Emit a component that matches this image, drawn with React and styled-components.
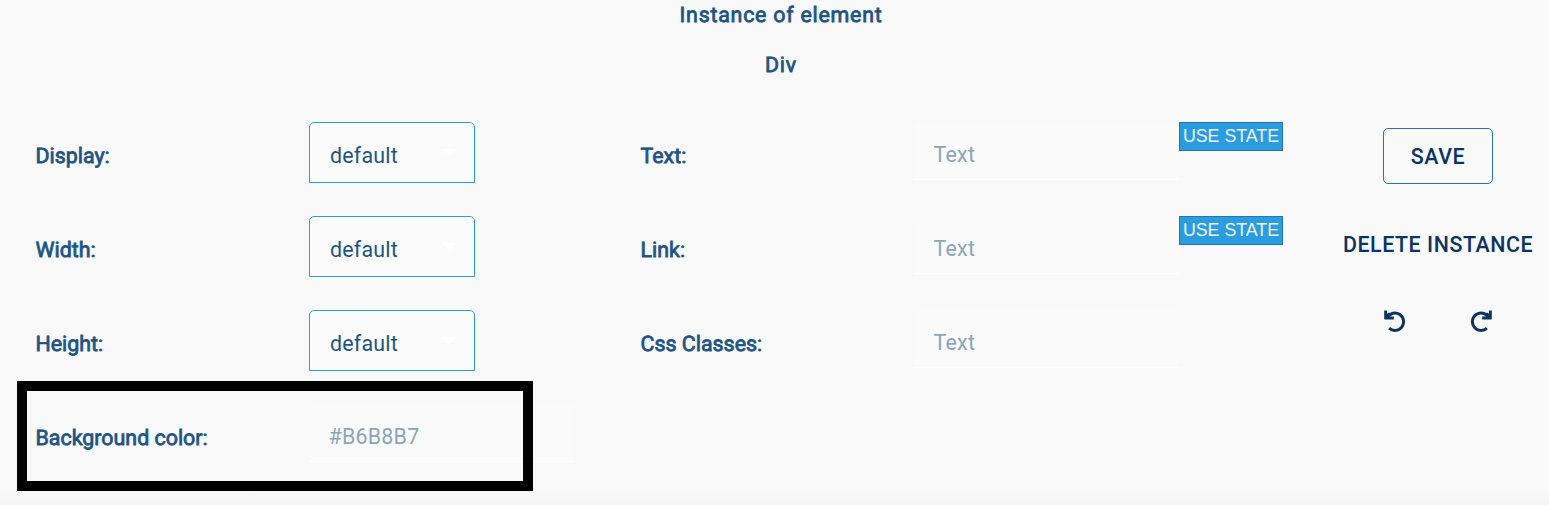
import React from "react";
import styled, { createGlobalStyle } from "styled-components";

const GlobalStyle = createGlobalStyle`
  * { box-sizing: border-box; }
  body { margin: 0; background: #f9f9f9; overflow: hidden; }
`;

const Panel = styled.main`
  position: relative;
  height: 505px;
  background: linear-gradient(to bottom, #f9f9f9 0, #f9f9f9 485px, #f5f5f5 505px);
  font-family: Roboto, sans-serif;
  font-size: 21.4px;
  color: #1e5484;
  text-rendering: geometricPrecision;
`;

const Header = styled.header`
  display: flex;
  flex-direction: column;
  align-items: center;
  padding-top: 1px;
  padding-left: 13px;
  height: 122px;
`;

const Title = styled.h1`
  margin: 0;
  height: 50px;
  font-size: 21.4px;
  font-weight: 400;
  line-height: 30px;
  letter-spacing: 0.75px;
  -webkit-text-stroke: 0.8px currentColor;
`;

const Content = styled.div`
  display: grid;
  grid-template-columns: 605px 687px 1fr;
  padding-left: 36px;
  padding-right: 1px;
`;

const Column = styled.section`
  display: flex;
  flex-direction: column;
  gap: 33px;
`;

const Field = styled.div`
  display: grid;
  grid-template-columns: 273px auto 1fr;
  align-items: start;
  height: 61px;
`;

const Label = styled.label`
  line-height: 26px;
  padding-top: 22px;
  margin-left: -0.5px;
  -webkit-text-stroke: 0.8px currentColor;
  white-space: nowrap;
`;

const Select = styled.button`
  display: flex;
  justify-content: space-between;
  align-items: center;
  width: 166px;
  height: 61px;
  padding: 5px 18px 0 20px;
  border: 1px solid #2a9de0;
  border-radius: 5px 5px 0 0;
  background: #fbfbfb;
  font: inherit;
  letter-spacing: 0.2px;
  color: inherit;
`;

const Caret = styled.span`
  margin-top: -5px;
  border: 7px solid transparent;
  border-top-color: #fff;
  border-bottom: 0;
`;

const Input = styled.input`
  width: 265px;
  height: 58px;
  padding: 8px 20px 0 19.5px;
  border: 0;
  border-bottom: 1px solid #fff;
  border-radius: 5px 5px 0 0;
  outline: 0;
  background: #fafafa;
  font: inherit;
  letter-spacing: 0.25px;
  &::placeholder { color: #8ba5be; opacity: 1; }
`;

const StateButton = styled.button`
  width: 104px;
  height: 29px;
  padding: 0;
  border: 1px solid #2374b5;
  background: #2a9de0;
  color: #f0f4f6;
  font: 17.8px/25px "Liberation Sans", Arial, sans-serif;
  white-space: nowrap;
`;

const Actions = styled.aside`
  display: flex;
  flex-direction: column;
  align-items: center;
  padding-top: 6px;
  color: #0b3464;
`;

const ActionButton = styled.button`
  width: ${(p) => p.$width}px;
  height: 56px;
  padding: 0;
  border: 1px solid ${(p) => (p.$outlined ? "#2374b5" : "transparent")};
  border-radius: 5px;
  background: transparent;
  color: inherit;
  font: 500 21.4px Roboto, sans-serif;
  letter-spacing: 0.55px;
  white-space: nowrap;
  & + & { margin-top: 32px; }
`;

const History = styled.div`
  display: flex;
  gap: 64px;
  margin-top: 38px;
`;

const IconButton = styled.button`
  display: block;
  width: 22px;
  height: 22px;
  padding: 0;
  border: 0;
  background: none;
  color: inherit;
  transform: ${(p) => (p.$flip ? "scaleX(-1)" : "none")};
  svg { display: block; }
`;

const Highlight = styled.div`
  position: absolute;
  left: 17px;
  top: 381px;
  width: 516px;
  height: 110px;
  border: 10px solid #000;
  pointer-events: none;
`;

const TurnIcon = () => (
  <svg width="22" height="22" viewBox="0 0 22 22" fill="none" stroke="currentColor">
    <path d="M3.4 7.3A8.7 8.7 0 1 1 5.1 18.2" strokeWidth="3" />
    <path
      d="M.2 .5H3.1V3.8L5 2.6L7.4 4.7L5.6 6.5H9.8V9.6H1L.2 8.9Z"
      fill="currentColor"
      stroke="none"
    />
  </svg>
);

const SelectField = ({ label }) => (
  <Field>
    <Label>{label}</Label>
    <Select>default<Caret /></Select>
  </Field>
);

const InputField = ({ label, placeholder, stateful }) => (
  <Field>
    <Label>{label}</Label>
    <Input placeholder={placeholder} />
    {stateful && <StateButton>USE STATE</StateButton>}
  </Field>
);

export default function App() {
  return (
    <Panel>
      <GlobalStyle />
      <Header>
        <Title>Instance of element</Title>
        <Title as="h2">Div</Title>
      </Header>
      <Content>
        <Column>
          <SelectField label="Display:" />
          <SelectField label="Width:" />
          <SelectField label="Height:" />
          <InputField label="Background color:" placeholder="#B6B8B7" />
        </Column>
        <Column>
          <InputField label="Text:" placeholder="Text" stateful />
          <InputField label="Link:" placeholder="Text" stateful />
          <InputField label="Css Classes:" placeholder="Text" />
        </Column>
        <Actions>
          <ActionButton $outlined $width={110}>SAVE</ActionButton>
          <ActionButton $width={200}>DELETE INSTANCE</ActionButton>
          <History>
            <IconButton aria-label="Undo"><TurnIcon /></IconButton>
            <IconButton aria-label="Redo" $flip><TurnIcon /></IconButton>
          </History>
        </Actions>
      </Content>
      <Highlight />
    </Panel>
  );
}
